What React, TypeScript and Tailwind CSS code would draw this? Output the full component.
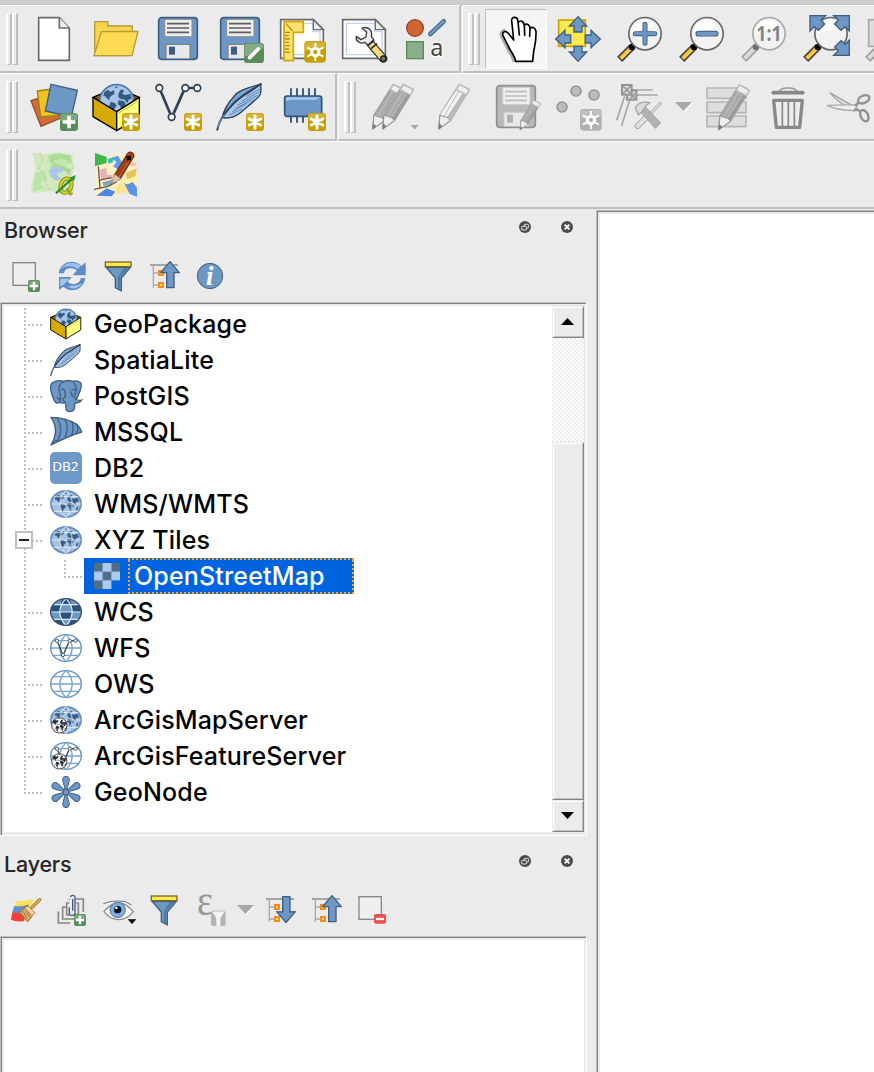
import type { ReactNode } from "react";

const BLUE = "#6d97c4";
const NAVY = "#3f5e82";
const DARK = "#2d4055";

function Icon({ children, small = false }: { children: ReactNode; small?: boolean }) {
  return (
    <svg
      className={small ? "size-8 shrink-0 overflow-visible" : "size-12 shrink-0 overflow-visible"}
      viewBox={small ? "0 0 96 96" : "0 0 144 144"}
      fill="none"
      aria-hidden="true"
    >
      {children}
    </svg>
  );
}

/* ---------- badges ---------- */

function PlusBadge({ x, y, s }: { x: number; y: number; s: number }) {
  const c = s / 2;
  return (
    <g transform={`translate(${x} ${y})`}>
      <rect width={s} height={s} rx={s * 0.17} fill="#5a8c5a" />
      <path d={`M2 ${c}V8Q2 2 8 2H${s - 8}Q${s - 2} 2 ${s - 2} 8V${c - 6}Z`} fill="#7ea67e" />
      <path d={`M${c} ${s * 0.15}V${s * 0.85}M${s * 0.15} ${c}H${s * 0.85}`} stroke="#fff" strokeWidth={s * 0.2} />
    </g>
  );
}

function StarBadge({ x = 90, y = 90 }: { x?: number; y?: number }) {
  return (
    <g transform={`translate(${x} ${y})`}>
      <rect width="54" height="54" rx="9" fill="#c4a000" />
      <path d="M2 24V10Q2 2 10 2H44Q52 2 52 10V18Z" fill="#d2b336" />
      <path d="M27 8V46M10 18L44 36M44 18L10 36" stroke="#fff" strokeWidth="9" strokeLinecap="round" />
    </g>
  );
}

function GearBadge({ x, y, gray = false }: { x: number; y: number; gray?: boolean }) {
  const bg = gray ? "#b0b0b0" : "#c4a000";
  return (
    <g transform={`translate(${x} ${y})`}>
      <rect width="65" height="65" rx="10" fill={bg} />
      <path d="M2 30V11Q2 2 11 2H54Q63 2 63 11V22Z" fill={gray ? "#bfbfbf" : "#d2b336"} />
      <circle cx="33" cy="33" r="11" stroke="#fff" strokeWidth="9" />
      <path
        d="M33 21V6M33 45V60M23 27L9 19M43 27L57 19M23 39L9 47M43 39L57 47"
        stroke="#fff"
        strokeWidth="6"
      />
    </g>
  );
}

/* ---------- project toolbar ---------- */

const NewProject = () => (
  <Icon>
    <path d="M26 8H88L118 39V136H26Z" fill="#fff" stroke="#6b6b6b" strokeWidth="5" />
    <path d="M88 8V39H118" fill="#eee" stroke="#6b6b6b" strokeWidth="5" />
  </Icon>
);

const OpenProject = () => (
  <Icon>
    <path d="M8 122V20H47V33H121V60L104 122Z" fill="#f8d54c" stroke="#b5993a" strokeWidth="4" />
    <path d="M28 50L138 49L120 122H6Z" fill="#fddb52" stroke="#b5993a" strokeWidth="4" />
  </Icon>
);

function Floppy({ gray = false }: { gray?: boolean }) {
  return (
    <g>
      <rect x="14" y="8" width="116" height="125" rx="9" fill={gray ? "#b9b9b9" : BLUE} stroke={gray ? "#8f8f8f" : NAVY} strokeWidth="5" />
      <rect x="32" y="13" width="82" height="52" rx="4" fill="#eee" stroke={gray ? "#c8c8c8" : "#8a8a8a"} strokeWidth="3" />
      <path d="M39 26H105M39 39H105M39 52H105" stroke={gray ? "#bbb" : "#5c5c5c"} strokeWidth="5" />
      <path d="M36 130V88H108V130" fill="#e8e8e8" stroke={gray ? "#ccc" : "#757575"} strokeWidth="3" />
      <rect x="45" y="95" width="18" height="24" fill={gray ? "#b0b0b0" : NAVY} />
    </g>
  );
}

const SaveProject = () => (
  <Icon>
    <Floppy />
  </Icon>
);

const SaveProjectAs = () => (
  <Icon>
    <Floppy />
    <rect x="84" y="84" width="60" height="60" rx="10" fill="#5a8c5a" />
    <path d="M86 126V94Q86 86 94 86H134Q142 86 142 94V100Z" fill="#86ac86" />
    <path d="M101 128L127 102" stroke="#fff" strokeWidth="11" strokeLinecap="round" />
    <path d="M97 132L108 128L101 121Z" fill="#fff" />
  </Icon>
);

function Page() {
  return (
    <g>
      <path d="M8 14H106L136 44V130H8Z" fill="#fff" stroke="#6b6b6b" strokeWidth="5" />
      <path d="M19 25H105V50H126V119H19Z" stroke="#c4d3f4" strokeWidth="4" />
      <path d="M106 14V44H136Z" fill="#ececec" stroke="#6b6b6b" strokeWidth="4" />
    </g>
  );
}

const NewLayout = () => (
  <Icon>
    <Page />
    <path d="M18 20H76V52H46V137H18Z" fill="#fbe272" stroke="#d3a600" strokeWidth="5" />
    <path d="M24 26L44 48M21 52H36M21 62H33M21 72H36M21 82H33M21 92H36M21 102H33M21 112H36" stroke="#b89000" strokeWidth="4" />
    <GearBadge x={79} y={78} />
  </Icon>
);

const LayoutManager = () => (
  <Icon>
    <Page />
    <path d="M91 85L130 131" stroke="#2b2b2b" strokeWidth="25" strokeLinecap="round" />
    <path d="M92 86L129 130" stroke="#fbdc7c" strokeWidth="18" />
    <path d="M84 91L103 76M93 101L111 86" stroke="#2b2b2b" strokeWidth="5" />
    <circle cx="130" cy="131" r="8" fill="#777" stroke="#222" strokeWidth="4" />
    <path
      d="M71 38C87 35 98 48 94 64L101 74L84 90L74 82C59 89 46 77 49 64L63 74L78 66L80 51L66 40Z"
      fill="#ededed"
      stroke="#3b3b3b"
      strokeWidth="4"
      strokeLinejoin="round"
    />
  </Icon>
);

const StyleManager = () => (
  <Icon>
    <circle cx="39" cy="39" r="25" fill="#cf6535" stroke="#97441e" strokeWidth="4" />
    <path d="M85 57L125 19" stroke={NAVY} strokeWidth="14" strokeLinecap="round" />
    <path d="M85 57L125 19" stroke={BLUE} strokeWidth="8" strokeLinecap="round" />
    <rect x="14" y="80" width="50" height="51" fill="#8baf8b" stroke="#5a8c5a" strokeWidth="4" />
    <text x="85" y="124" fontFamily="Noto Sans, sans-serif" fontSize="70" fill="#454545" stroke="#fafafa" strokeWidth="7" paintOrder="stroke">
      a
    </text>
  </Icon>
);

/* ---------- navigation toolbar ---------- */

const Pan = () => (
  <Icon>
    <path d="M66 141C62 122 51 110 44 95L29 65Q24 50 36 46L58 72" stroke="#aaa" strokeWidth="9" />
    <path
      d="M71 139C69 122 55 109 48 92L33 62C29 49 41 46 49 55L65 75L59 17C58 4 76 4 77 16L79 22C86 14 95 19 97 30C104 24 113 28 114 40C122 34 131 39 132 50C133 77 129 90 125 109L122 139Z"
      fill="#fff"
      stroke="#000"
      strokeWidth="5"
      strokeLinejoin="round"
    />
    <path d="M78 20L82 60M97 30L98 61M114 40L113 64" stroke="#000" strokeWidth="5" strokeLinecap="round" />
  </Icon>
);

const PanToSelection = () => (
  <Icon>
    <rect x="14" y="15" width="80" height="79" fill="#fce94f" stroke="#c7a200" strokeWidth="5" />
    <g fill={BLUE} stroke={NAVY} strokeWidth="4">
      <path d="M72 5L98 33H84V51H60V33H46Z" />
      <path d="M72 139L98 111H84V94H60V111H46Z" />
      <path d="M5 72L33 46V60H50V84H33V98Z" />
      <path d="M139 72L111 46V60H94V84H111V98Z" />
    </g>
  </Icon>
);

function Lens({ gray = false }: { gray?: boolean }) {
  return (
    <g>
      <path d="M48 96L11 133" stroke={gray ? "#a0a0a0" : "#444"} strokeWidth="22" />
      <path d="M43 101L14 130" stroke={gray ? "#ddd" : "#f9c22e"} strokeWidth="12" />
      <path d="M43 105L16 132" stroke={gray ? "#ccc" : "#fff0a0"} strokeWidth="2" />
      <circle cx="48" cy="96" r="10" fill={gray ? "#707070" : "#000"} />
      <circle cx="87" cy="56" r="48.500" fill="#f2f2f2" stroke={gray ? "#a8a8a8" : "#666"} strokeWidth="5" />
      <path d="M45 60A42 42 0 0 1 112 23Q115 43 82 46Q57 49 45 60Z" fill="#fff" />
    </g>
  );
}

const ZoomIn = () => (
  <Icon>
    <Lens />
    <path d="M87 28V85M58 56H116" stroke={NAVY} strokeWidth="15" strokeLinecap="round" />
    <path d="M87 28V85M58 56H116" stroke={BLUE} strokeWidth="10" strokeLinecap="round" />
  </Icon>
);

const ZoomOut = () => (
  <Icon>
    <Lens />
    <path d="M61 56H113" stroke={NAVY} strokeWidth="17" strokeLinecap="round" />
    <path d="M61 56H113" stroke={BLUE} strokeWidth="12" strokeLinecap="round" />
  </Icon>
);

const ZoomNative = () => (
  <Icon>
    <Lens gray />
    <text x="87" y="77" textAnchor="middle" fontFamily="Open Sans, sans-serif" fontWeight="700" fontSize="62" textLength="76" lengthAdjust="spacingAndGlyphs" fill="#858585">
      1:1
    </text>
  </Icon>
);

const ZoomFull = () => (
  <Icon>
    <Lens />
    <g fill={BLUE} stroke={NAVY} strokeWidth="4">
      <path d="M24 2H71L57 15L68 27L49 46L37 35L24 48Z" />
      <path d="M142 2H95L109 15L98 27L117 46L129 35L142 48Z" />
      <path d="M142 121H95L109 108L98 96L117 77L129 88L142 75Z" />
    </g>
  </Icon>
);

const ZoomSelection = () => (
  <Icon>
    <rect x="14" y="14" width="84" height="80" fill="#ddd" stroke="#aaa" strokeWidth="5" />
    <Lens gray />
  </Icon>
);

/* ---------- data source toolbar ---------- */

const DataSources = () => (
  <Icon>
    <path d="M3 53L80 28L104 100L33 130Z" fill="#d26d3b" stroke="#a04a20" strokeWidth="4" />
    <path d="M22 24L86 15L100 96L32 102Z" fill="#f0c320" stroke="#9d8019" strokeWidth="4" />
    <path d="M63 4L142 22L124 102L46 84Z" fill={BLUE} stroke={NAVY} strokeWidth="4" />
    <PlusBadge x={90} y={90} s={54} />
  </Icon>
);

function Continents({ color = NAVY }: { color?: string }) {
  return (
    <g fill={color}>
      <path d="M-37-27L-26-34L-19-27L-8-33L-6-22L-17-15L-23-7L-19-2L-27-5L-34-14L-40-15Z" />
      <path d="M-18 2L-5 6L0 14L-8 24L-12 41L-17 29L-22 14Z" />
      <path d="M5-22L13-35L23-31L16-22L26-18L41-22L45-7L36-4L32 7L24-4L12-6L5-12Z" />
      <path d="M6-2L21 0L28 9L22 18L20 33L13 30L11 15L3 9Z" />
      <path d="M36 18L44 12L41 26L35 29ZM-7-41L3-44L1-38Z" />
    </g>
  );
}

function GeoPackageArt() {
  return (
    <g>
      <path d="M3 43L38 28H108L142 43L74 84Z" fill="#7d6200" stroke="#000" strokeWidth="4" />
      <circle cx="74" cy="56" r="51" fill="#a9c6e8" stroke="#527ba9" strokeWidth="5" />
      <g transform="translate(74 54)">
        <Continents color="#355a82" />
      </g>
      <path d="M3 43L74 86V143L3 101Z" fill="#d5ab00" stroke="#000" strokeWidth="4" strokeLinejoin="round" />
      <path d="M142 43L74 86V143L142 101Z" fill="#ffff80" stroke="#000" strokeWidth="4" strokeLinejoin="round" />
      <path d="M80 90L137 55" stroke="#d9b72c" strokeWidth="3" />
    </g>
  );
}

const NewGeoPackage = () => (
  <Icon>
    <GeoPackageArt />
    <StarBadge />
  </Icon>
);

function VectorArt() {
  return (
    <g stroke={DARK}>
      <path d="M21 26L48 91M59 91L88 26M105 15H119" strokeWidth="8" />
      <g strokeWidth="5" fill="#fff">
        <circle cx="16" cy="15" r="10" />
        <circle cx="94" cy="15" r="10" />
        <circle cx="130" cy="15" r="10" />
        <circle cx="53" cy="102" r="10" />
      </g>
    </g>
  );
}

const NewShapefile = () => (
  <Icon>
    <VectorArt />
    <StarBadge />
  </Icon>
);

function FeatherArt() {
  return (
    <g>
      <path d="M20 104C20 82 38 57 59 34C76 17 106 16 135 3C133 17 138 27 131 38C117 53 92 73 75 88C61 100 46 106 26 105Z" fill="#a9c8eb" stroke={DARK} strokeWidth="4" strokeLinejoin="round" />
      <path d="M48 87L93 61M55 78L110 50M64 66L126 37M77 54L131 27M39 96L79 78M91 40L133 18" stroke="#5e88b5" strokeWidth="3" />
      <path d="M24 98C43 69 68 44 103 26L134 3C104 12 74 20 59 36C37 59 22 83 22 104Z" fill="#7ba4d2" stroke={DARK} strokeWidth="3" />
      <path d="M4 140C8 113 28 86 53 61C81 32 107 24 134 3" stroke={DARK} strokeWidth="6" strokeLinecap="round" />
      <path d="M6 134C9 117 17 106 27 94" stroke="#6f9ac8" strokeWidth="3" />
    </g>
  );
}

const NewSpatiaLite = () => (
  <Icon>
    <FeatherArt />
    <StarBadge />
  </Icon>
);

const NewMemoryLayer = () => (
  <Icon>
    <path d="M39 16V40M57 16V40M75 16V40M93 16V40M111 16V40M39 100V119M57 100V119M75 100V119M93 100V119" stroke={NAVY} strokeWidth="6" />
    <rect x="20" y="39" width="111" height="61" rx="7" fill={BLUE} stroke="#2f537c" strokeWidth="5" />
    <path d="M24 55V43H127L114 50H40Z" fill="#a8c8ec" />
    <StarBadge />
  </Icon>
);

/* ---------- digitizing toolbar ---------- */

function PencilShape({ light = false }: { light?: boolean }) {
  return (
    <g stroke="#999" strokeWidth="4" strokeLinejoin="round">
      <path d="M88 4L118 20L62 112L26 138L30 96Z" fill={light ? "#dedede" : "#a8a8a8"} />
      <path d="M79 20L109 36L62 112L52 100L43 104L30 96Z" fill={light ? "#f2f2f2" : "#aaa"} stroke="none" />
      <path d="M99 30L109 36L62 112L52 101Z" fill={light ? "#b9b9b9" : "#9d9d9d"} stroke="none" />
      <path d="M87 24L41 101M99 31L51 105" stroke={light ? "#bbb" : "#c3c3c3"} strokeWidth="3" />
      <path d="M88 4L118 20L109 36L79 20Z" fill="#eee" stroke="#bcbcbc" />
      <path d="M30 96L42 101L51 103L62 112L26 138Z" fill="#eee" stroke="#929292" strokeWidth="3" />
      <path d="M28 121L37 130L26 139Z" fill="#777" stroke="none" />
    </g>
  );
}

const CurrentEdits = () => (
  <Icon>
    <g transform="translate(-12 0)">
      <PencilShape />
    </g>
    <g transform="translate(18 0)">
      <PencilShape />
    </g>
  </Icon>
);

const ToggleEditing = () => (
  <Icon>
    <PencilShape light />
  </Icon>
);

const SaveEdits = () => (
  <Icon>
    <Floppy gray />
    <g transform="translate(67 49) scale(.66)">
      <PencilShape />
    </g>
  </Icon>
);

const AddPoint = () => (
  <Icon>
    <g fill="#bcbcbc" stroke="#969696" strokeWidth="5">
      <circle cx="66" cy="24" r="15" />
      <circle cx="120" cy="36" r="15" />
      <circle cx="24" cy="72" r="15" />
    </g>
    <GearBadge x={78} y={78} gray />
  </Icon>
);

const VertexTool = () => (
  <Icon>
    <path d="M48 21H110M55 36H125M26 40L2 112M41 51L17 128" stroke="#a6a6a6" strokeWidth="5" />
    <rect x="33" y="22" width="28" height="28" fill="#ddd" stroke="#939393" strokeWidth="6" />
    <rect x="18" y="6" width="29" height="29" fill="#ddd" stroke="#939393" strokeWidth="6" />
    <path d="M21 9L44 32M44 9L21 32M43 32L57 46M57 32L43 46" stroke="#999" strokeWidth="5" />
    <path d="M95 101L133 61" stroke="#a7a7a7" strokeWidth="9" strokeLinecap="round" />
    <path d="M95 101L133 61" stroke="#e0e0e0" strokeWidth="4" strokeLinecap="round" />
    <path d="M65 129L98 96" stroke="#a7a7a7" strokeWidth="18" strokeLinecap="round" />
    <path d="M65 129L98 96" stroke="#e2e2e2" strokeWidth="12" strokeLinecap="round" />
    <path d="M88 71L134 120L118 136L75 88Z" fill="#b1b1b1" stroke="#a3a3a3" strokeWidth="3" />
    <path d="M58 75Q69 52 101 59L90 68L76 88L67 96Z" fill="#dcdcdc" stroke="#a3a3a3" strokeWidth="4" />
  </Icon>
);

const MultiEdit = () => (
  <Icon>
    <path d="M15 15H132V46H15ZM15 57H132V89H15ZM15 99H132V131H15Z" fill="#dedede" stroke="#b6b6b6" strokeWidth="5" />
    <g transform="translate(24 2)">
      <PencilShape />
    </g>
  </Icon>
);

const DeleteSelected = () => (
  <Icon>
    <path d="M45 26Q51 14 72 15Q94 14 99 26" stroke="#999" strokeWidth="5" />
    <path d="M28 29H116" stroke="#888" strokeWidth="11" strokeLinecap="round" />
    <path d="M29 52H115L107 133H37Z" fill="#ededed" stroke="#888" strokeWidth="10" strokeLinejoin="round" />
    <path d="M55 57V130M73 57V130M91 57V130" stroke="#888" strokeWidth="5" />
  </Icon>
);

const CutFeatures = () => (
  <Icon>
    <path d="M11 29L94 76L85 84Q44 66 11 29Z" fill="#ddd" stroke="#a4a4a4" strokeWidth="4" />
    <path d="M3 67L95 65L86 83Q34 82 3 67Z" fill="#eee" stroke="#aaa" strokeWidth="4" />
    <ellipse cx="113" cy="49" rx="18" ry="11" transform="rotate(-24 113 49)" stroke="#939393" strokeWidth="7" />
    <ellipse cx="115" cy="98" rx="18" ry="11" transform="rotate(65 115 98)" stroke="#8f8f8f" strokeWidth="7" />
    <path d="M84 80L102 83M87 69L97 58" stroke="#939393" strokeWidth="7" />
  </Icon>
);

/* ---------- web toolbar ---------- */

const OsmDownload = () => (
  <Icon>
    <path d="M8 4L42 10L83 3L127 11L132 49L123 85L133 122L95 128L61 120L2 126L7 90L17 52Z" fill="#cfebbd" />
    <path d="M55 16L70 8L121 12L125 34L105 44L93 36L74 42L58 33Z" fill="#addc98" />
    <path d="M16 66L43 61L49 85L27 98L45 110L9 123Z" fill="#bce3a8" />
    <path d="M58 48L72 36L94 40L124 56L118 72L104 60Z" fill="#a9da94" />
    <path d="M68 31L93 22L119 33L108 46L80 40Z" fill="#c2e7ae" />
    <path d="M68 49Q91 46 101 54Q98 66 84 65Q75 73 94 83Q97 94 81 89Q62 83 60 68L55 60Z" fill="#abc5ee" />
    <path d="M29 6Q45 25 31 42Q23 56 40 63Q53 82 44 95Q59 107 55 119M131 51Q113 53 116 74" stroke="#d9ab9c" strokeWidth="3" strokeDasharray="5 3" />
    <path d="M48 116Q64 92 79 93L94 85" stroke="#dde9a1" strokeWidth="4" />
    <ellipse cx="108" cy="104" rx="16" ry="22" transform="rotate(20 108 104)" stroke="#6f801b" strokeWidth="12" />
    <ellipse cx="108" cy="104" rx="16" ry="22" transform="rotate(20 108 104)" stroke="#d3d61f" strokeWidth="7" />
    <path d="M110 112L121 130L128 126" stroke="#9ba719" strokeWidth="7" />
    <path d="M78 127L133 77" stroke="#166822" strokeWidth="6" />
    <path d="M80 125L131 79" stroke="#5ccf4d" strokeWidth="2" />
    <path d="M137 72L132 91L119 80Z" fill="#249a32" />
  </Icon>
);

const OsmEdit = () => (
  <Icon>
    <path d="M9 6L40 17L75 7L105 14L132 5V43L135 80V137L98 123L59 136L10 134V93Z" fill="#ffeec6" />
    <path d="M9 6L44 18V36L9 46Z" fill="#43b64a" />
    <path d="M58 21L78 14L90 34L78 56L64 46L74 33Z" fill="#5b9ded" />
    <path d="M92 88L112 80L135 110V137L112 128Z" fill="#5b93e6" />
    <path d="M13 134L44 112L70 122L59 136Z" fill="#4d86e0" />
    <path d="M23 56L42 51L45 71L61 73V84H27Z" fill="#e9afb2" />
    <path d="M31 94L62 85L66 100L35 106Z" fill="#83a7b8" />
    <path d="M72 110L92 90L112 128L98 123L74 130Z" fill="#ffe28c" />
    <path d="M81 92L133 68L135 87L107 100Z" fill="#fff2a4" />
    <path d="M113 35H133V45H113Z" fill="#f7c9a0" />
    <path d="M101 66L134 52L130 76L105 85Z" fill="#e3c45c" />
    <path d="M46 25L66 18L62 34L50 38Z" fill="#30beb7" />
    <path d="M6 115L48 106L74 92M19 46L24 112M20 88L58 80" stroke="#5b5b55" strokeWidth="4" />
    <path d="M77 76L115 14" stroke="#6b2a0c" strokeWidth="24" strokeLinecap="round" />
    <path d="M79 72L115 14" stroke="#9a4018" strokeWidth="18" strokeLinecap="round" />
    <path d="M81 78L119 18" stroke="#c96a36" strokeWidth="3" />
    <path d="M60 98L66 69L88 83Z" fill="#e6c3ae" stroke="#9c7664" strokeWidth="2" />
    <rect x="104" y="15" width="13" height="13" fill="#130600" />
  </Icon>
);

/* ---------- small toolbar icons ---------- */

const AddSelected = () => (
  <Icon small>
    <rect x="9" y="8" width="67" height="68" fill="#efefef" stroke="#888780" strokeWidth="4" />
    <PlusBadge x={54} y={60} s={36} />
  </Icon>
);

const Refresh = () => (
  <Icon small>
    <path d="M8 40C14 4 52-4 77 17L89 7V46H50L63 31C49 20 25 24 24 40Z" fill="#5c8dc6" />
    <path d="M88 54C83 90 45 101 22 80L9 90V51H47L35 65C50 78 73 72 74 54Z" fill="#5c8dc6" />
    <path d="M13 28Q36-4 75 16L67 28Q40 8 13 28Z" fill="#9fc1e8" />
    <path d="M12 56H40L25 72L13 80ZM34 80Q62 94 80 70Q66 78 48 77Z" fill="#a5c5e9" />
  </Icon>
);

const Filter = () => (
  <Icon small>
    <path d="M12 22H85L58 54V93L40 83V54Z" fill={BLUE} stroke={NAVY} strokeWidth="4" strokeLinejoin="round" />
    <path d="M65 24H79L54 51V87L48 84V52Z" fill="#4f79a6" />
    <rect x="10" y="6" width="77" height="14" fill="#fce94f" stroke="#756727" strokeWidth="4" />
  </Icon>
);

function TreeArrow({ down = false }: { down?: boolean }) {
  return (
    <Icon small>
      <path d="M6 15H90" stroke="#85857d" strokeWidth="4" />
      <path d="M16 17V83M16 39H33M16 75H33" stroke="#aaa" strokeWidth="4" />
      <g fill="#fce94f" stroke="#f58b1d" strokeWidth="6">
        <rect x="33" y="33" width="12" height="12" />
        <rect x="33" y="69" width="12" height="12" />
      </g>
      <path
        d={down ? "M66 86L94 53L78 54V8H56V54L38 53Z" : "M66 5L94 38H78V83H56V38H38Z"}
        fill={BLUE}
        stroke={NAVY}
        strokeWidth="4"
        strokeLinejoin="round"
      />
    </Icon>
  );
}

const Info = () => (
  <Icon small>
    <circle cx="48" cy="48" r="38" fill={BLUE} stroke={NAVY} strokeWidth="3" />
    <text x="47" y="75" textAnchor="middle" fontFamily="Liberation Serif, serif" fontStyle="italic" fontWeight="700" fontSize="80" fill="#fff">
      i
    </text>
  </Icon>
);

const LayerStyling = () => (
  <Icon small>
    <path d="M18 20Q45 23 71 14L45 80Q22 85 3 77Z" fill="#f8e25a" />
    <path d="M13 36Q38 39 57 31L45 60Q19 60 7 54Z" fill="#6591c9" />
    <path d="M7 54Q29 61 50 53L41 82Q17 84 3 77Z" fill="#f2403b" />
    <path d="M66 40L89 17" stroke="#9e6c20" strokeWidth="10" strokeLinecap="round" />
    <path d="M66 40L89 17" stroke="#dfa944" strokeWidth="6" strokeLinecap="round" />
    <path d="M49 34L72 58L54 83L28 57Z" fill="#d7aa68" stroke="#936a35" strokeWidth="3" />
    <path d="M54 36L76 57L66 65L44 42Z" fill="#f2d497" stroke="#936a35" strokeWidth="2" />
    <path d="M39 50L49 71M32 57L51 82M50 52L59 69" stroke="#aa7640" strokeWidth="3" />
  </Icon>
);

const AddGroup = () => (
  <Icon small>
    <path d="M10 55H7V87H43M30 39H20V75H58M40 63H32V27H40M61 27H67V62H53M58 15H82V54M40 18V15" stroke="#888780" strokeWidth="5" />
    <path d="M40 40V58Q40 64 46 64H52Q57 64 57 58V10Q57 4 50 4Q44 4 44 10M50 15V50" stroke={NAVY} strokeWidth="4" />
    <PlusBadge x={54} y={60} s={36} />
  </Icon>
);

const Visibility = () => (
  <Icon small>
    <path d="M6 53Q25 29 49 27Q72 27 94 53Q76 77 48 77Q22 75 6 53Z" fill="#fff" stroke="#8c8c87" strokeWidth="4" />
    <path d="M4 29Q22 21 47 21Q70 18 89 33" stroke="#777" strokeWidth="3" />
    <circle cx="47" cy="48" r="23" fill="#80acdc" stroke="#4d79a8" strokeWidth="3" />
    <circle cx="47" cy="47" r="11" fill="#06121f" />
    <circle cx="43" cy="42" r="4" fill="#fff" />
    <path d="M77 76H103L90 90Z" fill="#000" />
  </Icon>
);

const ExpressionFilter = () => (
  <Icon small>
    <text x="9" y="62" fontFamily="Liberation Serif, serif" fontSize="130" textLength="48" lengthAdjust="spacingAndGlyphs" fill="#969696">
      ε
    </text>
    <rect x="51" y="50" width="44" height="46" rx="6" fill="#b4b4b4" />
    <path d="M55 54H91L79 72V96H67V72Z" fill="#f4f4f4" />
    <path d="M53 52H93" stroke="#d4d4d4" strokeWidth="4" />
  </Icon>
);

const RemoveLayer = () => (
  <Icon small>
    <rect x="9" y="8" width="67" height="68" fill="#efefef" stroke="#888780" strokeWidth="4" />
    <rect x="54" y="60" width="36" height="29" rx="6" fill="#ef4d50" />
    <path d="M60 75H84" stroke="#fff" strokeWidth="7" />
  </Icon>
);

/* ---------- browser tree icons ---------- */

const GeoPackage = () => (
  <Icon small>
    <g transform="scale(.65)">
      <GeoPackageArt />
    </g>
  </Icon>
);

const SpatiaLite = () => (
  <Icon small>
    <g transform="scale(.67)">
      <FeatherArt />
    </g>
  </Icon>
);

const PostGis = () => (
  <Icon small>
    <path
      d="M14 5Q25-1 43 4Q55-1 67 4Q83 0 92 8Q98 17 85 46L78 59Q88 63 95 60Q90 69 75 69L73 86Q71 95 57 95Q47 94 48 83L46 67Q35 72 28 66Q18 75 11 58Q1 34 2 18Q3 8 14 5Z"
      fill={BLUE}
      stroke={NAVY}
      strokeWidth="4"
    />
    <path d="M29 66Q33 58 31 46L27 30Q26 10 43 5M33 28Q43 25 45 35Q49 52 39 57L43 66M67 4Q83 18 78 37Q68 48 78 59M64 30Q73 26 80 31M61 34Q66 42 68 52M20 52Q28 62 34 55" stroke={NAVY} strokeWidth="4" />
  </Icon>
);

const Mssql = () => (
  <Icon small>
    <path d="M3 4Q51 5 80 25Q91 34 95 48Q57 59 3 87Q30 43 3 4Z" fill={BLUE} stroke={NAVY} strokeWidth="4" strokeLinejoin="round" />
    <path d="M22 6Q42 42 22 75M44 8Q59 33 45 64M64 15Q74 31 65 57M80 25Q86 38 80 52" stroke={NAVY} strokeWidth="4" />
    <path d="M3 87Q16 69 22 73Q11 78 3 87Z" fill={NAVY} />
  </Icon>
);

const Db2 = () => (
  <Icon small>
    <rect width="96" height="96" rx="15" fill="#6d98c9" />
    <text x="46" y="58" textAnchor="middle" fontFamily="Noto Sans, sans-serif" fontWeight="400" letterSpacing="0" fontSize="38" textLength="79" lengthAdjust="spacingAndGlyphs" fill="#fff">
      DB2
    </text>
  </Icon>
);

function GlobeGrid({ color, width = 4 }: { color: string; width?: number }) {
  return (
    <path
      d="M48 7Q11 48 48 89M48 7Q85 48 48 89M12 26H84M2 48H94M12 70H84"
      stroke={color}
      strokeWidth={width}
    />
  );
}

function MapGlobeArt() {
  return (
    <g>
      <ellipse cx="48" cy="48" rx="45" ry="39" fill="#a4c2e4" stroke="#6a91bd" strokeWidth="6" />
      <g transform="translate(48 46) scale(.85 .75)">
        <Continents color="#3a5f87" />
      </g>
      <g opacity=".6">
        <GlobeGrid color="#fff" width={3.5} />
      </g>
    </g>
  );
}

const Wms = () => (
  <Icon small>
    <MapGlobeArt />
  </Icon>
);

const Wcs = () => (
  <Icon small>
    <ellipse cx="48" cy="48" rx="46" ry="40" fill={BLUE} />
    <path d="M11 25H32V47H3Q3 34 11 25ZM65 25H85Q93 35 93 47H65ZM35 12Q48 5 60 12L65 25H33ZM31 48H65V70H31ZM12 70H33L42 88Q20 83 12 70ZM64 70H84Q75 83 54 88Z" fill="#2c5179" />
    <GlobeGrid color="#dceaff" width={3.5} />
    <ellipse cx="48" cy="48" rx="46" ry="40" stroke="#334b66" strokeWidth="4" />
  </Icon>
);

function WireGlobe() {
  return (
    <g>
      <ellipse cx="48" cy="48" rx="46" ry="40" fill="#fff" stroke="#608fc4" strokeWidth="4" />
      <GlobeGrid color="#78a4d5" />
    </g>
  );
}

const Wfs = () => (
  <Icon small>
    <WireGlobe />
    <g transform="translate(13 19) scale(.49)">
      <VectorArt />
    </g>
  </Icon>
);

const Ows = () => (
  <Icon small>
    <WireGlobe />
  </Icon>
);

function ArcBadge() {
  return (
    <g transform="translate(28 64)">
      <circle r="23" fill="#f4f4f4" stroke="#454c52" strokeWidth="3" />
      <g transform="scale(.5)">
        <Continents color="#252e35" />
      </g>
      <path d="M-20-8Q0 3 20-8M-18 12Q0 4 18 12" stroke="#727980" strokeWidth="2" />
    </g>
  );
}

const ArcMap = () => (
  <Icon small>
    <MapGlobeArt />
    <ArcBadge />
  </Icon>
);

const ArcFeature = () => (
  <Icon small>
    <WireGlobe />
    <g transform="translate(13 19) scale(.49)">
      <VectorArt />
    </g>
    <ArcBadge />
  </Icon>
);

const GEO_ANGLES = [0, 60, 120, 180, 240, 300];

const GeoNode = () => (
  <Icon small>
    <g fill={BLUE} stroke={NAVY} strokeWidth="3">
      {GEO_ANGLES.map((a) => (
        <path key={a} transform={`rotate(${a} 48 48)`} d="M45 39L38 13Q38 1 48 1Q58 1 58 13L51 39Z" />
      ))}
      <circle cx="48" cy="48" r="9" />
    </g>
  </Icon>
);

const Tiles = () => (
  <svg className="size-[26px] shrink-0" viewBox="0 0 78 78" aria-hidden="true">
    <path d="M0 0H78V52H52V78H0Z" fill="#adcbef" />
    <path d="M0 0H26V26H0ZM52 0H78V26H52ZM26 26H52V52H26ZM0 52H26V78H0Z" fill="#536b85" />
    <path d="M52 52H78V78H52Z" fill="#0064e1" />
    <path d="M26 0V78M52 0V78M0 26H78M0 52H78" stroke="#7fa9d6" strokeWidth="2" />
  </svg>
);

/* ---------- widgets ---------- */

function Handle() {
  return (
    <div className="flex h-[52px] w-3 shrink-0">
      <div className="w-1.5 border-y border-l-2 border-r-2 border-t-white border-r-[#bfbfbf] border-b-[#bfbfbf] border-l-white" />
      <div className="w-1.5 border-y border-l-2 border-r-2 border-t-white border-r-[#bfbfbf] border-b-[#bfbfbf] border-l-white" />
    </div>
  );
}

function Tool({ children, label }: { children: ReactNode; label: string }) {
  return (
    <button aria-label={label} className="flex h-[60px] w-[62px] shrink-0 items-center justify-center">
      {children}
    </button>
  );
}

function DropArrow({ className }: { className: string }) {
  return (
    <svg className={className} viewBox="0 0 18 10" aria-hidden="true">
      <path d="M1 1H18L9.500 10Z" fill="#fff" />
      <path d="M0 0H17L8.500 9Z" fill="#a8a8a8" />
    </svg>
  );
}

function ToolBar({ children, className = "pl-1.5" }: { children: ReactNode; className?: string }) {
  return (
    <div className={`flex h-[68px] shrink-0 items-center border-t border-b-2 border-t-white border-b-[#bfbfbf] ${className}`}>
      <Handle />
      <div className="flex items-center pl-[5px]">{children}</div>
    </div>
  );
}

function PanelTitle({ title }: { title: string }) {
  return (
    <div className="flex h-9 w-[588px] items-start pl-1">
      <h2 className="flex-1 pt-[3px] font-[Inter,sans-serif] text-[21.5px] leading-9 font-medium tracking-[-0.2px] text-[#262626]">{title}</h2>
      <button aria-label="Float" className="mt-3 mr-[30px] size-3">
        <svg viewBox="0 0 36 36" className="size-3 overflow-visible" fill="none">
          <circle cx="18" cy="18" r="18" fill="#4b4b4b" />
          <rect x="15" y="10" width="14" height="11" rx="3" stroke="#ddd" strokeWidth="3" />
          <rect x="8" y="16" width="15" height="11" rx="3" fill="#4b4b4b" stroke="#eee" strokeWidth="3" />
        </svg>
      </button>
      <button aria-label="Close" className="mt-3 mr-[15px] size-3">
        <svg viewBox="0 0 36 36" className="size-3 overflow-visible" fill="none">
          <circle cx="18" cy="18" r="18" fill="#4b4b4b" />
          <path d="M11 11L25 25M25 11L11 25" stroke="#fff" strokeWidth="6" />
        </svg>
      </button>
    </div>
  );
}

type Row = { label: string; icon: () => ReactNode; open?: boolean };

const TOP_ROWS: Row[] = [
  { label: "GeoPackage", icon: GeoPackage },
  { label: "SpatiaLite", icon: SpatiaLite },
  { label: "PostGIS", icon: PostGis },
  { label: "MSSQL", icon: Mssql },
  { label: "DB2", icon: Db2 },
  { label: "WMS/WMTS", icon: Wms },
  { label: "XYZ Tiles", icon: Wms, open: true },
];

const BOTTOM_ROWS: Row[] = [
  { label: "WCS", icon: Wcs },
  { label: "WFS", icon: Wfs },
  { label: "OWS", icon: Ows },
  { label: "ArcGisMapServer", icon: ArcMap },
  { label: "ArcGisFeatureServer", icon: ArcFeature },
  { label: "GeoNode", icon: GeoNode },
];

const V_DOTS = "w-0.5 bg-[repeating-linear-gradient(180deg,transparent_0_2px,#bfbfbf_2px_4px)]";
const H_DOTS = "h-0.5 w-4 bg-[repeating-linear-gradient(90deg,transparent_0_2px,#bfbfbf_2px_4px)]";

function TreeRow({ row, last = false }: { row: Row; last?: boolean }) {
  const RowIcon = row.icon;
  return (
    <li className="relative flex h-9 items-center pl-5">
      <div className={`${V_DOTS} ${last ? "h-5 self-start" : "h-full"}`} />
      <div className={`${H_DOTS} mt-0.5`} />
      {row.open && (
        <span className="absolute top-[9px] left-[11px] flex size-[18px] items-center justify-center border-2 border-[#bfbfbf] bg-white">
          <span className="h-0.5 w-2.5 bg-[#222]" />
        </span>
      )}
      <span className="ml-2 flex">
        <RowIcon />
      </span>
      <span className="ml-3 whitespace-nowrap">{row.label}</span>
    </li>
  );
}

function ScrollButton({ up = false }: { up?: boolean }) {
  return (
    <button
      aria-label={up ? "Scroll up" : "Scroll down"}
      className="flex size-8 shrink-0 items-center justify-center border-t border-r border-b border-l border-t-[#ebebeb] border-r-[#858585] border-b-[#858585] border-l-[#ebebeb] bg-[#ebebeb] pr-px pb-px shadow-[inset_1px_1px_0_#fff,inset_-1px_-1px_0_#bfbfbf]"
    >
      <svg width="13" height="7" viewBox="0 0 13 7" aria-hidden="true">
        <path d={up ? "M6.500 0L13 7H0Z" : "M0 0H13L6.500 7Z"} fill="#000" />
      </svg>
    </button>
  );
}

export default function App() {
  return (
    <div className="flex h-[1072px] w-[874px] flex-col overflow-hidden bg-[#ebebeb]">
      <div className="h-[6px] shrink-0 border-b border-[#9d9d9d] bg-[#cdcdcd]" />
      <header className="-mt-px flex shrink-0 flex-col pt-px">
        <div className="-mt-px flex">
          <ToolBar className="w-[461px] border-r-2 border-r-[#bfbfbf] pl-1.5">
            <Tool label="New project"><NewProject /></Tool>
            <Tool label="Open project"><OpenProject /></Tool>
            <Tool label="Save project"><SaveProject /></Tool>
            <Tool label="Save project as"><SaveProjectAs /></Tool>
            <Tool label="New print layout"><NewLayout /></Tool>
            <Tool label="Layout manager"><LayoutManager /></Tool>
            <Tool label="Style manager"><StyleManager /></Tool>
          </ToolBar>
          <ToolBar className="ml-px w-[412px] border-l border-l-white pl-[5px]">
            <div className="flex h-[60px] w-[62px] shrink-0 items-center justify-center border-t border-r border-b border-l border-t-[#bfbfbf] border-r-white border-b-white border-l-[#bfbfbf] bg-[#f5f5f5]">
              <Pan />
            </div>
            <Tool label="Pan to selection"><PanToSelection /></Tool>
            <Tool label="Zoom in"><ZoomIn /></Tool>
            <Tool label="Zoom out"><ZoomOut /></Tool>
            <Tool label="Zoom to native resolution"><ZoomNative /></Tool>
            <Tool label="Zoom full"><ZoomFull /></Tool>
            <Tool label="Zoom to selection"><ZoomSelection /></Tool>
          </ToolBar>
        </div>
        <div className="flex">
          <ToolBar className="w-[337px] border-r-2 border-r-[#bfbfbf] pl-1.5">
            <Tool label="Data source manager"><DataSources /></Tool>
            <Tool label="New GeoPackage layer"><NewGeoPackage /></Tool>
            <Tool label="New shapefile layer"><NewShapefile /></Tool>
            <Tool label="New SpatiaLite layer"><NewSpatiaLite /></Tool>
            <Tool label="New temporary layer"><NewMemoryLayer /></Tool>
          </ToolBar>
          <ToolBar className="ml-px w-[536px] border-l border-l-white pl-[5px]">
            <div className="relative flex">
              <Tool label="Current edits"><CurrentEdits /></Tool>
              <DropArrow className="absolute right-[3px] bottom-[7px] h-[5px] w-[10px]" />
            </div>
            <Tool label="Toggle editing"><ToggleEditing /></Tool>
            <Tool label="Save edits"><SaveEdits /></Tool>
            <Tool label="Add point"><AddPoint /></Tool>
            <Tool label="Vertex tool"><VertexTool /></Tool>
            <div className="flex w-6 items-center pl-1">
              <DropArrow className="h-[10px] w-[18px]" />
            </div>
            <Tool label="Modify attributes"><MultiEdit /></Tool>
            <Tool label="Delete selected"><DeleteSelected /></Tool>
            <Tool label="Cut features"><CutFeatures /></Tool>
          </ToolBar>
        </div>
        <ToolBar>
          <Tool label="OSM download"><OsmDownload /></Tool>
          <Tool label="OSM edit"><OsmEdit /></Tool>
        </ToolBar>
      </header>

      <main className="flex min-h-0 flex-1">
        <aside className="flex w-[596px] shrink-0 flex-col">
          <section className="flex h-[634px] shrink-0 flex-col">
            <PanelTitle title="Browser" />
            <div className="flex h-[57px] gap-3.5 pt-[15px] pl-2.5">
              <AddSelected />
              <Refresh />
              <Filter />
              <TreeArrow />
              <Info />
            </div>
            <div className="flex h-[534px] w-[587px] border border-t-[#bfbfbf] border-r-white border-b-white border-l-[#bfbfbf]">
              <div className="flex w-full border-t border-l border-[#808080]">
                <div className="flex w-full border-2 border-b-[3px] border-[#ebebeb] bg-white">
                  <ul className="flex-1 font-[Inter,sans-serif] text-[25px] leading-9 font-medium tracking-[0.16px] text-black">
                    {TOP_ROWS.map((row) => (
                      <TreeRow key={row.label} row={row} />
                    ))}
                    <li className="flex h-9 items-center pl-5">
                      <div className={`${V_DOTS} h-full`} />
                      <div className={`${V_DOTS} ml-[38px] h-5 self-start`} />
                      <div className={`${H_DOTS} mt-0.5`} />
                      <div className="ml-0.5 flex h-9 w-[270px] items-center bg-[#0064e1] pl-2.5 text-white">
                        <Tiles />
                        <div className="ml-2 h-9 w-[226px] bg-[repeating-linear-gradient(90deg,#f7a12d_0_2px,#0064e1_2px_4px)] p-0.5">
                          <div className="-mx-0.5 h-8 bg-[repeating-linear-gradient(180deg,#f7a12d_0_2px,#0064e1_2px_4px)] px-0.5">
                            <div className="h-8 bg-[#0064e1] pl-1 leading-8">OpenStreetMap</div>
                          </div>
                        </div>
                      </div>
                    </li>
                    {BOTTOM_ROWS.map((row, i) => (
                      <TreeRow key={row.label} row={row} last={i === BOTTOM_ROWS.length - 1} />
                    ))}
                  </ul>
                  <div className="flex w-8 flex-col">
                    <ScrollButton up />
                    <div className="h-[104px] bg-[repeating-conic-gradient(#ebebeb_0_25%,#fff_0_50%)] bg-size-[4px_4px]" />
                    <div className="flex-1 border border-t-[#ebebeb] border-r-[#858585] border-b-[#858585] border-l-[#ebebeb] bg-[#ebebeb] shadow-[inset_1px_1px_0_#fff,inset_-1px_-1px_0_#bfbfbf]" />
                    <ScrollButton />
                  </div>
                </div>
              </div>
            </div>
          </section>
          <section className="flex min-h-0 flex-1 flex-col">
            <PanelTitle title="Layers" />
            <div className="flex h-[57px] shrink-0 gap-3.5 pt-[15px] pl-2.5">
              <LayerStyling />
              <AddGroup />
              <Visibility />
              <Filter />
              <div className="flex h-8 w-14 items-center justify-between">
                <ExpressionFilter />
                <DropArrow className="mr-[-5px] h-[10px] w-[18px]" />
              </div>
              <TreeArrow down />
              <TreeArrow />
              <RemoveLayer />
            </div>
            <div className="flex w-[587px] flex-1 border border-b-0 border-t-[#bfbfbf] border-r-white border-l-[#bfbfbf]">
              <div className="flex w-full border-t border-l border-[#808080]">
                <div className="w-full border-2 border-b-0 border-[#ebebeb] bg-white" />
              </div>
            </div>
          </section>
        </aside>
        <div className="mt-px flex flex-1 border-t border-l border-[#bfbfbf]">
          <div className="flex flex-1 border-t border-l border-[#808080]">
            <div className="flex-1 border-t-2 border-l-2 border-[#ebebeb] bg-white" />
          </div>
        </div>
      </main>
    </div>
  );
}
